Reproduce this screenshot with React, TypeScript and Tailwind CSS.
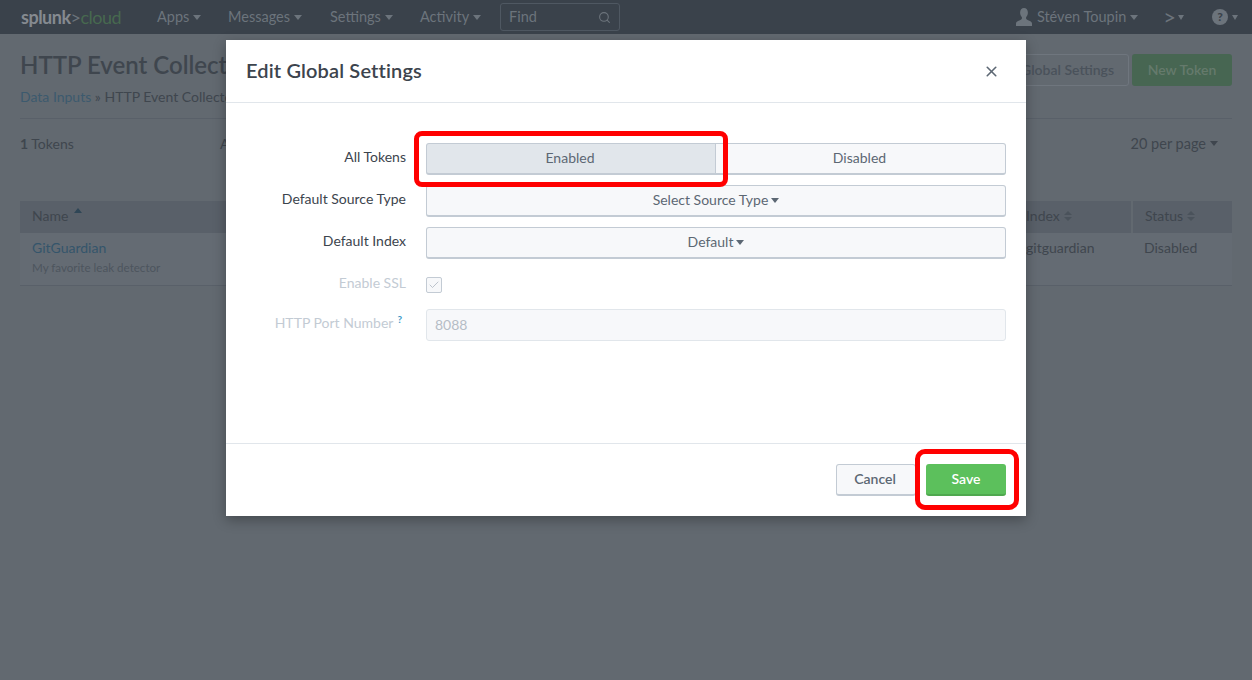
import { Check, Search, X } from "lucide-react";

const font = "font-['Lato','Open_Sans',sans-serif]";

const Caret = ({ className = "" }: { className?: string }) => (
  <span className={`inline-block h-0 w-0 border-x-4 border-t-[5px] border-x-transparent border-t-current ${className}`} />
);

const SortArrows = () => (
  <span className="ml-[4px] inline-flex flex-col gap-[2px] text-[#4a525b]">
    <span className="h-0 w-0 border-x-[4px] border-b-[4px] border-x-transparent border-b-current" />
    <span className="h-0 w-0 border-x-[4px] border-t-[4px] border-x-transparent border-t-current" />
  </span>
);

const NavMenu = ({ label, className = "" }: { label: string; className?: string }) => (
  <a className={`flex items-center gap-1 text-[14.5px] text-[#6c747c] ${className}`}>
    {label}
    <Caret />
  </a>
);

const UserIcon = () => (
  <svg width="16" height="18" viewBox="0 0 16 18" fill="currentColor" className="mr-[5px]">
    <path d="M8 0c2.4 0 3.9 1.900 3.900 4.600 0 1.900-.8 3.600-1.800 4.600v1.400c0 .8 1.100 1.200 2.600 1.800 1.800.7 3.300 1.400 3.300 3V18H0v-2.600c0-1.600 1.500-2.300 3.300-3 1.500-.6 2.600-1 2.600-1.800V9.200C4.900 8.200 4.100 6.500 4.100 4.600 4.100 1.900 5.600 0 8 0z" />
  </svg>
);

const Navbar = () => (
  <nav className="flex h-[34px] items-center bg-[#3a424b] pr-[14px] pl-[21px]">
    <div className="flex w-[136px] items-baseline text-[18px] tracking-[-0.5px]">
      <span className="font-bold text-[#858a90]">splunk</span>
      <span className="text-[#6c747c]">&gt;</span>
      <span className="text-[#47694f]">cloud</span>
    </div>
    <NavMenu label="Apps" className="w-[71px]" />
    <NavMenu label="Messages" className="w-[102px]" />
    <NavMenu label="Settings" className="w-[90px]" />
    <NavMenu label="Activity" className="w-[80px]" />
    <div className="flex h-[28px] w-[120px] items-center justify-between rounded-[3px] border border-[#4f5862] pr-2 pl-2 text-[14.5px] text-[#6c747c]">
      Find
      <Search size={13} />
    </div>
    <div className="ml-auto flex items-center text-[14.5px] text-[#6c747c]">
      <UserIcon />
      Stéven Toupin
      <Caret className="ml-1" />
      <span className="ml-[25px] text-[22px] leading-none">&gt;</span>
      <Caret className="ml-[2px] border-x-[3px] border-t-[4px]" />
      <span className="ml-[28px] flex h-[16px] w-[16px] items-center justify-center rounded-full bg-[#6c747c] text-xs font-black text-[#3a424b]">?</span>
      <Caret className="ml-[4px] border-x-[3px] border-t-[4px]" />
    </div>
  </nav>
);

const Background = () => (
  <main className="px-5">
    <div className="flex h-[85px] items-start justify-between border-b border-[#596069] pt-[20px]">
      <div>
        <h1 className="text-2xl leading-[22px] font-semibold text-[#3f464e]">HTTP Event Collector</h1>
        <div className="mt-[11px] text-sm leading-[20px] text-[#3f464e]">
          <span className="text-[#3c5a6e]">Data Inputs</span> » HTTP Event Collector
        </div>
      </div>
      <div className="flex gap-[3px]">
        <div className="flex h-[32px] w-[140px] items-center justify-end rounded-[3px] border border-[#6f767e] pr-[14px] text-sm font-semibold text-[#4a525b]">
          Global Settings
        </div>
        <div className="flex h-[32px] w-[100px] items-center justify-center rounded-[3px] bg-[#476652] text-sm font-semibold text-[#657a6c]">
          New Token
        </div>
      </div>
    </div>
    <div className="flex h-[50px] items-center text-sm text-[#3f464e]">
      <span className="w-[200px]"><b>1</b> Tokens</span>
      <span>All</span>
      <span className="ml-auto flex items-center gap-1 pr-[14px] text-[14.5px]">
        20 per page <Caret />
      </span>
    </div>
    <table className="mt-[32px] w-full text-sm text-[#3f464e]">
      <thead>
        <tr className="h-[32px] bg-[#596069] text-left">
          <th className="pb-[2px] pl-3 font-normal">
            Name <Caret className="mb-[8px] ml-[2px] rotate-180 text-[#2f4656]" />
          </th>
          <th className="w-[112px] border-r-2 border-[#626970] pb-[2px] pl-[6px] font-normal">
            <span className="inline-flex items-center">Index<SortArrows /></span>
          </th>
          <th className="w-[100px] pb-[2px] pl-3 font-normal">
            <span className="inline-flex items-center">Status<SortArrows /></span>
          </th>
        </tr>
      </thead>
      <tbody>
        <tr className="h-[52px] border-b border-[#596069] bg-[#646b73] align-top">
          <td className="pt-[6px] pl-3">
            <div className="leading-[18px] text-[#34556b]">GitGuardian</div>
            <div className="mt-[3px] text-[11.6px] text-[#4d555e]">My favorite leak detector</div>
          </td>
          <td className="pt-[6px] pl-[6px] leading-[18px]">gitguardian</td>
          <td className="pt-[6px] pl-3 leading-[18px]">Disabled</td>
        </tr>
      </tbody>
    </table>
  </main>
);

const FormRow = ({ label, disabled, help, children }: { label: string; disabled?: boolean; help?: boolean; children: React.ReactNode }) => (
  <div className="flex items-start">
    <label className={`flex w-[180px] justify-end pt-[6px] text-sm leading-[16px] ${disabled ? "text-[#c3cbd4]" : "text-[#3c444d]"}`}>
      {label}
      {help && <sup className="mt-[9px] mr-[4px] ml-[4px] text-[10px] font-bold text-[#3c98c8]">?</sup>}
    </label>
    <div className="ml-[20px] w-[580px]">{children}</div>
  </div>
);

const SelectButton = ({ label }: { label: string }) => (
  <button className="flex h-[32px] w-full items-center justify-center gap-[3px] rounded-[3px] border border-b-2 border-[#c3cbd4] bg-[#f7f8fa] pb-[1px] text-sm text-[#5c6773]">
    {label}
    <Caret />
  </button>
);

const Modal = () => (
  <div className="absolute top-[40px] left-[226px] flex h-[476px] w-[800px] flex-col bg-white shadow-[0_4px_12px_rgba(0,0,0,0.3)]">
    <header className="flex h-[63px] shrink-0 items-center justify-between border-b border-[#e1e6eb] pr-[26px] pb-[3px] pl-5">
      <h3 className="text-xl font-semibold tracking-[0.15px] text-[#3c444d]">Edit Global Settings</h3>
      <X size={17} strokeWidth={2.25} className="mt-[3px] text-[#5c6773]" />
    </header>
    <div className="flex flex-1 flex-col gap-[10px] pt-[40px]">
      <FormRow label="All Tokens">
        <div className="flex h-[32px] text-sm text-[#5c6773]">
          <button className="w-[290px] rounded-l-[3px] border border-b-2 border-[#c3cbd4] bg-[#e1e6eb] pr-[2px] pb-[1px]">Enabled</button>
          <button className="w-[290px] rounded-r-[3px] border border-b-2 border-l-0 border-[#c3cbd4] bg-[#f7f8fa] pr-[2px] pb-[1px]">Disabled</button>
        </div>
      </FormRow>
      <FormRow label="Default Source Type">
        <SelectButton label="Select Source Type" />
      </FormRow>
      <FormRow label="Default Index">
        <SelectButton label="Default" />
      </FormRow>
      <FormRow label="Enable SSL" disabled>
        <div className="flex h-[32px] items-center">
          <span className="flex h-[16px] w-[16px] items-center justify-center rounded-[2px] border border-[#c3cbd4] bg-[#f7f8fa] text-[#a9b3bd]">
            <Check size={12} strokeWidth={1.5} />
          </span>
        </div>
      </FormRow>
      <div className="mt-[-2px]">
        <FormRow label="HTTP Port Number" disabled help>
          <div className="flex h-[32px] items-center rounded-[3px] border border-[#e1e6eb] bg-[#f7f8fa] pl-2 text-sm text-[#b5bdc6]">8088</div>
        </FormRow>
      </div>
    </div>
    <footer className="flex h-[73px] shrink-0 items-center justify-end gap-[10px] border-t border-[#e1e6eb] pr-5">
      <button className="h-[32px] w-[80px] rounded-[3px] border border-b-2 border-[#c3cbd4] bg-[#f7f8fa] pr-[2px] pb-[1px] text-sm font-semibold text-[#5c6773]">Cancel</button>
      <button className="h-[32px] w-[80px] rounded-[3px] border-b-2 border-[#4fa84f] bg-[#5cc05c] text-sm font-semibold text-white">Save</button>
    </footer>
  </div>
);

export default function App() {
  return (
    <div className={`relative h-[680px] w-[1252px] overflow-hidden bg-[#626970] ${font}`}>
      <Navbar />
      <Background />
      <Modal />
      <div className="absolute top-[131px] left-[414px] h-[56px] w-[314px] rounded-[8px] border-[5px] border-[#ff0000]" />
      <div className="absolute top-[449px] left-[915px] h-[61px] w-[104px] rounded-[10px] border-[5px] border-[#ff0000]" />
    </div>
  );
}
